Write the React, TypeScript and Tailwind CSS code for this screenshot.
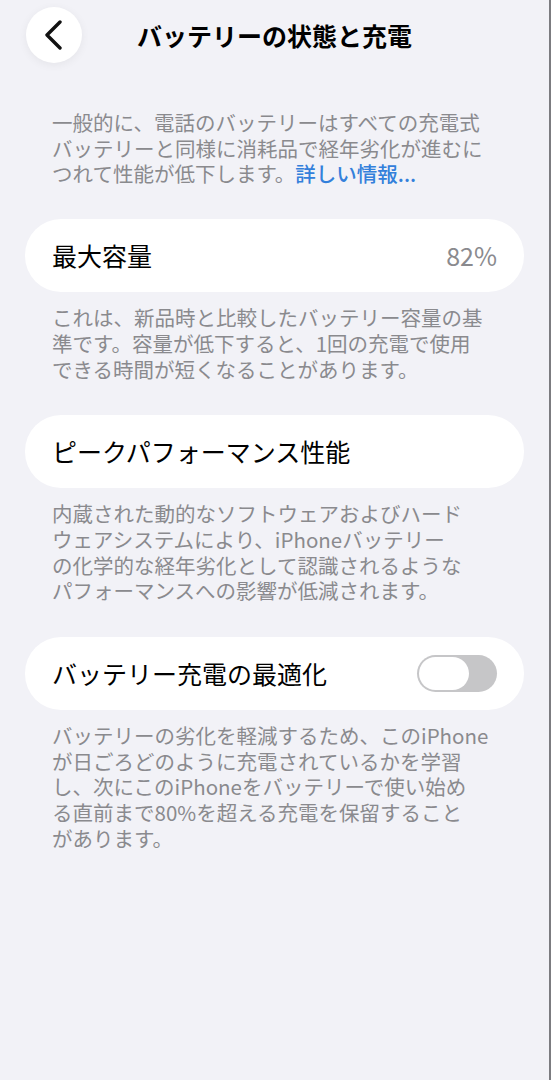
const BackButton = () => {
  return (
    <button
      type="button"
      className="flex h-[56px] w-[56px] items-center justify-center rounded-full bg-white shadow-[0_2px_10px_rgba(0,0,0,0.06)]"
    >
      <svg width="22" height="30" viewBox="0 0 22 30" fill="none">
        <path d="M17 2L4 15L17 28" stroke="#111" strokeWidth="3.4" strokeLinecap="round" strokeLinejoin="round" />
      </svg>
    </button>
  );
};

const Toggle = () => {
  return (
    <div className="flex h-[37px] w-[80px] items-center rounded-full bg-[#c6c6c8] p-[2px]">
      <div className="h-[33px] w-[50px] rounded-full bg-white" />
    </div>
  );
};

const Card = ({ label, children }: { label: string; children?: React.ReactNode }) => {
  return (
    <div className="flex h-[73px] items-center justify-between rounded-[36px] bg-white pl-[27px] pr-[27px]">
      <span className="text-[25px] leading-none text-black">{label}</span>
      {children}
    </div>
  );
};

const Note = ({ children, className = '' }: { children: React.ReactNode; className?: string }) => {
  return (
    <p className={`whitespace-nowrap px-[27px] text-[20.5px] leading-[25.7px] text-[#8a8a8e] ${className}`}>
      {children}
    </p>
  );
};

const App = () => {
  return (
    <div
      className="min-h-screen w-full border-r-2 border-[#7c7c80] bg-[#f2f2f7]"
      style={{ fontFamily: '"Noto Sans CJK JP", "Noto Sans", sans-serif' }}
    >
      <header className="grid grid-cols-[56px_1fr_56px] items-center px-[26px] pt-[7px]">
        <BackButton />
        <h1 className="text-center text-[25px] font-bold leading-none text-black">
          バッテリーの状態と充電
        </h1>
        <div />
      </header>

      <main className="px-[25px]">
        <Note className="mt-[47px]">
          一般的に、電話のバッテリーはすべての充電式
          <br />
          バッテリーと同様に消耗品で経年劣化が進むに
          <br />
          つれて性能が低下します。<span className="font-medium text-[#3380db]">詳しい情報...</span>
        </Note>

        <div className="mt-[32px]">
          <Card label="最大容量">
            <span className="text-[25px] leading-none text-[#8a8a8e]">82%</span>
          </Card>
          <Note className="mt-[13px]">
            これは、新品時と比較したバッテリー容量の基
            <br />
            準です。容量が低下すると、1回の充電で使用
            <br />
            できる時間が短くなることがあります。
          </Note>
        </div>

        <div className="mt-[33px]">
          <Card label="ピークパフォーマンス性能" />
          <Note className="mt-[13px]">
            内蔵された動的なソフトウェアおよびハード
            <br />
            ウェアシステムにより、iPhoneバッテリー
            <br />
            の化学的な経年劣化として認識されるような
            <br />
            パフォーマンスへの影響が低減されます。
          </Note>
        </div>

        <div className="mt-[33px]">
          <Card label="バッテリー充電の最適化">
            <Toggle />
          </Card>
          <Note className="mt-[13px]">
            バッテリーの劣化を軽減するため、このiPhone
            <br />
            が日ごろどのように充電されているかを学習
            <br />
            し、次にこのiPhoneをバッテリーで使い始め
            <br />
            る直前まで80%を超える充電を保留すること
            <br />
            があります。
          </Note>
        </div>
      </main>
    </div>
  );
};

export default App;
